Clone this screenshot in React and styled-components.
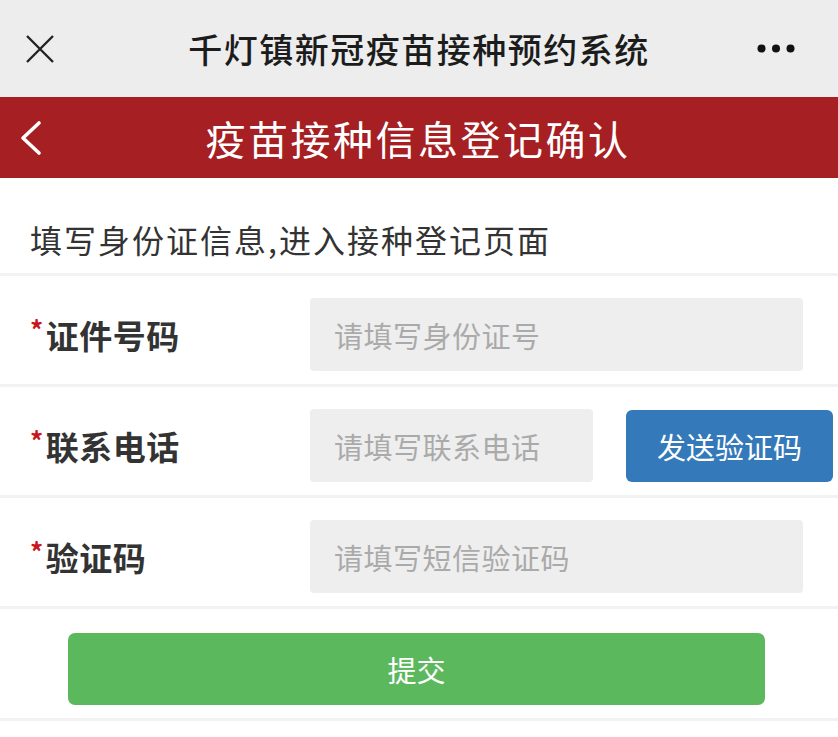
import styled, { createGlobalStyle } from "styled-components";

const GlobalStyle = createGlobalStyle`
    body {
        margin: 0;
        background: #ffffff;
        font-family: "Noto Sans CJK SC", "Noto Sans", sans-serif;
    }
`;

const Page = styled.div`
    width: 838px;
    min-height: 737px;
    background: #ffffff;
`;

const TopBar = styled.div`
    height: 97px;
    background: #ededed;
    display: grid;
    grid-template-columns: 90px 1fr 90px;
    align-items: center;
`;

const TopTitle = styled.div`
    text-align: center;
    font-size: 34px;
    font-weight: 500;
    color: #1c1c1c;
    letter-spacing: 1.5px;
`;

const IconSlot = styled.div`
    display: flex;
    justify-content: ${(p) => (p.$right ? "flex-end" : "flex-start")};
    padding: ${(p) => (p.$right ? "0 43px 0 0" : `0 0 0 ${p.$left || 26}px`)};
`;

const RedBar = styled.div`
    height: 81px;
    background: #a51f23;
    display: grid;
    grid-template-columns: 90px 1fr 90px;
    align-items: center;
`;

const RedTitle = styled.div`
    text-align: center;
    font-size: 40px;
    color: #ffffff;
    letter-spacing: 2.5px;
    margin-right: 2px;
`;

const Intro = styled.div`
    padding: 41px 30px 14px;
    font-size: 32px;
    line-height: 40px;
    color: #333333;
    letter-spacing: 2px;
`;

const Row = styled.div`
    display: grid;
    grid-template-columns: 280px 1fr;
    align-items: center;
    padding: 22px 5px 13px 30px;
    border-top: 3px solid #f2f2f2;
`;

const Label = styled.div`
    font-size: 33px;
    font-weight: 700;
    color: #333333;
    display: flex;
    align-items: center;
    letter-spacing: 0.5px;

    span {
        color: #c8161d;
        font-size: 26px;
        margin-right: 2px;
        align-self: flex-start;
        margin-top: -1px;
    }
`;

const Field = styled.div`
    display: flex;
    align-items: center;
    gap: 33px;
`;

const Input = styled.input`
    box-sizing: border-box;
    width: ${(p) => p.$width}px;
    height: 73px;
    border: none;
    outline: none;
    border-radius: 4px;
    background: #eeeeee;
    padding: 0 24px;
    font-family: "Noto Sans CJK SC", "Noto Sans", sans-serif;
    font-size: 29px;
    letter-spacing: 0.5px;
    color: #333333;

    &::placeholder {
        color: #aaaaaa;
    }
`;

const SendButton = styled.button`
    width: 207px;
    height: 72px;
    border: none;
    border-radius: 6px;
    background: #3479b9;
    color: #ffffff;
    font-family: "Noto Sans CJK SC", "Noto Sans", sans-serif;
    font-size: 29px;
    padding: 0;
`;

const Footer = styled.div`
    padding: 24px 0 13px 68px;
    border-top: 3px solid #f2f2f2;
    border-bottom: 3px solid #f2f2f2;
`;

const SubmitButton = styled.button`
    width: 697px;
    height: 72px;
    border: none;
    border-radius: 7px;
    background: #5cb85c;
    color: #ffffff;
    font-family: "Noto Sans CJK SC", "Noto Sans", sans-serif;
    font-size: 29px;
    padding: 0;
`;

const CloseIcon = () => (
    <svg width="28" height="28" viewBox="0 0 28 28">
        <path d="M1 1 L27 27 M27 1 L1 27" stroke="#222" strokeWidth="2.4" fill="none" />
    </svg>
);

const MoreIcon = () => (
    <svg width="38" height="9" viewBox="0 0 38 9">
        <circle cx="4.5" cy="4.5" r="4" fill="#111" />
        <circle cx="19" cy="4.5" r="4" fill="#111" />
        <circle cx="33.5" cy="4.5" r="4" fill="#111" />
    </svg>
);

const BackIcon = () => (
    <svg width="22" height="36" viewBox="0 0 22 36">
        <path d="M19 3 L3 18 L19 33" stroke="#fff" strokeWidth="3.6" fill="none" strokeLinecap="round" strokeLinejoin="round" />
    </svg>
);

const App = () => {
    return (
        <Page>
            <GlobalStyle />
            <TopBar>
                <IconSlot>
                    <CloseIcon />
                </IconSlot>
                <TopTitle>千灯镇新冠疫苗接种预约系统</TopTitle>
                <IconSlot $right>
                    <MoreIcon />
                </IconSlot>
            </TopBar>
            <RedBar>
                <IconSlot $left={20}>
                    <BackIcon />
                </IconSlot>
                <RedTitle>疫苗接种信息登记确认</RedTitle>
                <div />
            </RedBar>
            <Intro>填写身份证信息,进入接种登记页面</Intro>
            <Row>
                <Label>
                    <span>*</span>证件号码
                </Label>
                <Field>
                    <Input $width={493} placeholder="请填写身份证号" />
                </Field>
            </Row>
            <Row>
                <Label>
                    <span>*</span>联系电话
                </Label>
                <Field>
                    <Input $width={283} placeholder="请填写联系电话" />
                    <SendButton>发送验证码</SendButton>
                </Field>
            </Row>
            <Row>
                <Label>
                    <span>*</span>验证码
                </Label>
                <Field>
                    <Input $width={493} placeholder="请填写短信验证码" />
                </Field>
            </Row>
            <Footer>
                <SubmitButton>提交</SubmitButton>
            </Footer>
        </Page>
    );
};

export default App;
